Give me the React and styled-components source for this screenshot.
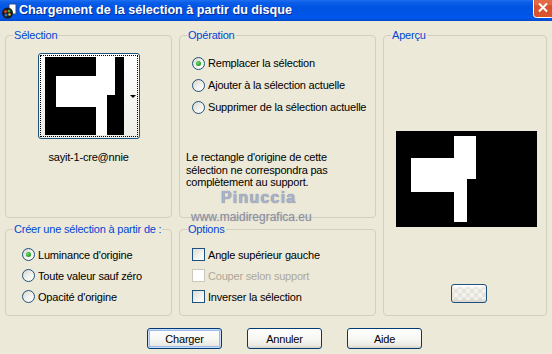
import React from "react";
import styled, { createGlobalStyle } from "styled-components";

const Global = createGlobalStyle`
  html, body { margin: 0; padding: 0; background: #ECE9D8; overflow: hidden; }
  body { font-family: "Liberation Sans", Arial, sans-serif; font-size: 11px; color: #000; }
`;

const Window = styled.div`
  position: relative;
  width: 552px;
  height: 354px;
  overflow: hidden;
  background: #ece9d8;
  display: flex;
  flex-direction: column;
`;

const TitleBar = styled.div`
  height: 21px;
  flex: none;
  display: flex;
  align-items: flex-start;
  background: linear-gradient(180deg, #1f6ff0 0%, #0a5ee8 12%, #0054e3 35%, #0055e8 70%, #0058ee 85%, #0049c8 100%);
  overflow: hidden;
`;

const TitleIcon = styled.div`
  flex: none;
  margin: 3px 0 0 1px;
  display: flex;
`;

const TitleText = styled.span`
  margin: 3px 0 0 2px;
  color: #fff;
  font-family: "Liberation Sans", Arial, sans-serif;
  font-weight: bold;
  font-size: 12.6px;
  line-height: 15px;
  text-shadow: 1px 1px 0 #0a2a8a;
  flex: 1;
`;

const CloseSlot = styled.div`
  flex: none;
  width: 19px;
  height: 18px;
  display: flex;
`;

const Content = styled.div`
  display: grid;
  grid-template-columns: 167px 197px 164px;
  grid-template-rows: 189px 93px;
  column-gap: 7px;
  row-gap: 5px;
  padding: 8px 0 0 5px;
`;

const Group = styled.fieldset`
  margin: 0;
  padding: 0;
  min-width: 0;
  border: 1px solid #d0d0bf;
  border-radius: 4px;
  display: flex;
  flex-direction: column;
  box-sizing: border-box;
  grid-column: ${(p) => p.$col};
  grid-row: ${(p) => p.$row};
`;

const Legend = styled.legend`
  color: #0046d5;
  padding: 0 1px;
  margin-left: 7px;
  font-size: 11px;
  line-height: 13px;
  letter-spacing: -0.2px;
`;

const Centered = styled.div`
  display: flex;
  flex-direction: column;
  align-items: center;
`;

const Thumb = styled.div`
  margin-top: 11px;
  width: 102px;
  height: 86px;
  box-sizing: border-box;
  border: 1px solid #1c5180;
  border-radius: 3px;
  padding: 1px;
  background: linear-gradient(180deg, #ffffff, #eeede6);
`;

const Focus = styled.div`
  height: 100%;
  box-sizing: border-box;
  border: 1px dotted #000;
  padding: 1px 0 0 4px;
  display: flex;
  align-items: flex-start;
`;

const Arrow = styled.div`
  width: 0;
  height: 0;
  margin: 38px 1px 0 auto;
  border-left: 3px solid transparent;
  border-right: 3px solid transparent;
  border-top: 3px solid #000;
`;

const Name = styled.div`
  margin-top: 12px;
  line-height: 13px;
  letter-spacing: -0.2px;
`;

const OptionList = styled.div`
  display: flex;
  flex-direction: column;
  padding: ${(p) => p.$pad};
`;

const Row = styled.label`
  display: flex;
  align-items: center;
  gap: 3px;
  height: ${(p) => p.$h}px;
  letter-spacing: -0.2px;
  color: ${(p) => (p.$disabled ? "#aca899" : "#000")};
`;

const Radio = styled.span`
  position: relative;
  width: 13px;
  height: 13px;
  box-sizing: border-box;
  border: 1px solid #1c5180;
  border-radius: 50%;
  background: linear-gradient(135deg, #d6d5cc 0%, #f3f2ed 55%, #ffffff 100%);
  flex: none;
  &::after {
    content: "";
    display: ${(p) => (p.$checked ? "block" : "none")};
    position: absolute;
    left: 3px;
    top: 3px;
    width: 5px;
    height: 5px;
    border-radius: 50%;
    background: radial-gradient(circle at 40% 40%, #7ee07e 0%, #2cab2c 50%, #1a8a1a 100%);
  }
`;

const Check = styled.span`
  width: 13px;
  height: 13px;
  box-sizing: border-box;
  flex: none;
  border: 1px solid ${(p) => (p.$disabled ? "#cac8bb" : "#1c5180")};
  background: ${(p) =>
    p.$disabled ? "#ffffff" : "linear-gradient(135deg, #dcdcd7 0%, #f4f4f0 60%, #ffffff 100%)"};
`;

const Note = styled.p`
  margin: 33px 0 0 6px;
  line-height: 12.5px;
  letter-spacing: -0.2px;
`;

const Preview = styled.div`
  margin: 89px 0 0 12px;
  width: 141px;
  height: 96px;
  background: #000;
  display: flex;
`;

const SmallBtn = styled.div`
  margin: 57px 0 0 67px;
  width: 36px;
  height: 19px;
  box-sizing: border-box;
  border: 1px solid #1c5180;
  border-radius: 3px;
  background:
    repeating-conic-gradient(#f4f3ee 0 25%, #e4e3dc 0 50%) 10px 4px / 8px 8px;
  box-shadow: inset 0 -2px 2px rgba(200, 196, 180, 0.5), inset 0 2px 2px #fff;
`;

const Footer = styled.div`
  display: flex;
  gap: 25px;
  padding-left: 147px;
  margin-top: 12px;
`;

const Button = styled.button`
  width: 75px;
  height: 21px;
  box-sizing: border-box;
  border: 1px solid #003c74;
  border-radius: 3px;
  font-family: "Liberation Sans", Arial, sans-serif;
  font-size: 11px;
  letter-spacing: -0.2px;
  color: #000;
  padding: 0;
  background: linear-gradient(180deg, #ffffff 0%, #f6f6f2 55%, #ebeae3 85%, #d8d3c8 100%);
  box-shadow: ${(p) =>
    p.$default ? "inset 0 0 0 1px #c6dcfa, inset 0 0 0 2px #9dbbeb" : "none"};
`;

const Watermark = styled.div`
  position: absolute;
  left: ${(p) => p.$x}px;
  top: ${(p) => p.$y}px;
  font-family: "Liberation Sans", Arial, sans-serif;
  font-size: ${(p) => p.$size}px;
  font-weight: ${(p) => (p.$bold ? "bold" : "normal")};
  letter-spacing: ${(p) => p.$ls}px;
  line-height: 18px;
  color: ${(p) => p.$color};
  text-shadow: 0 0 1px ${(p) => p.$shadow};
  pointer-events: none;
`;

function AppIcon() {
  return (
    <svg width="16" height="16" viewBox="0 0 16 16">
      <rect x="8" y="1" width="7" height="10" fill="#fff" stroke="#2a4d8f" strokeWidth="1" />
      <circle cx="6.5" cy="10" r="5.5" fill="#1a1a1a" />
      <circle cx="4.5" cy="8.5" r="1.6" fill="#d23a2a" />
      <circle cx="8" cy="8" r="1.5" fill="#3aa53a" />
      <circle cx="5" cy="12" r="1.5" fill="#2f6fd8" />
      <circle cx="8.5" cy="11.5" r="1.3" fill="#e0c020" />
    </svg>
  );
}

function CloseIcon() {
  return (
    <svg width="19" height="18" viewBox="0 0 19 18">
      <rect x="0.5" y="-3" width="21" height="20.5" rx="3" fill="#d9532f" stroke="#ffffff" />
      <rect x="1.5" y="-2" width="19" height="7" fill="#ea7a55" opacity="0.6" />
      <path d="M6 3.5 L14 11.5 M14 3.5 L6 11.5" stroke="#ffffff" strokeWidth="2" />
    </svg>
  );
}

function ThumbImage() {
  return (
    <svg width="79" height="78" viewBox="0 0 79 78">
      <rect width="79" height="78" fill="#000" />
      <path d="M51 0 H70 V38 H62 V78 H51 V50 H11 V19 H51 Z" fill="#fff" />
    </svg>
  );
}

function PreviewImage() {
  return (
    <svg width="141" height="96" viewBox="0 0 141 96">
      <rect width="141" height="96" fill="#000" />
      <path d="M58 5 H80 V48 H71 V91 H58 V61 H15 V27 H58 Z" fill="#fff" />
    </svg>
  );
}

export default function App() {
  return (
    <Window>
      <Global />
      <TitleBar>
        <TitleIcon>
          <AppIcon />
        </TitleIcon>
        <TitleText>Chargement de la sélection à partir du disque</TitleText>
        <CloseSlot>
          <CloseIcon />
        </CloseSlot>
      </TitleBar>

      <Content>
        <Group $col="1" $row="1">
          <Legend>Sélection</Legend>
          <Centered>
            <Thumb>
              <Focus>
                <ThumbImage />
                <Arrow />
              </Focus>
            </Thumb>
            <Name>sayit-1-cre@nnie</Name>
          </Centered>
        </Group>

        <Group $col="2" $row="1">
          <Legend>Opération</Legend>
          <OptionList $pad="10px 0 0 12px">
            <Row $h={22}>
              <Radio $checked />
              Remplacer la sélection
            </Row>
            <Row $h={22}>
              <Radio />
              Ajouter à la sélection actuelle
            </Row>
            <Row $h={22}>
              <Radio />
              Supprimer de la sélection actuelle
            </Row>
          </OptionList>
          <Note>
            Le rectangle d'origine de cette
            <br />
            sélection ne correspondra pas
            <br />
            complètement au support.
          </Note>
        </Group>

        <Group $col="3" $row="1 / span 2">
          <Legend>Aperçu</Legend>
          <Preview>
            <PreviewImage />
          </Preview>
          <SmallBtn />
        </Group>

        <Group $col="1" $row="2">
          <Legend>Créer une sélection à partir de :</Legend>
          <OptionList $pad="8px 0 0 16px">
            <Row $h={21}>
              <Radio $checked />
              Luminance d'origine
            </Row>
            <Row $h={21}>
              <Radio />
              Toute valeur sauf zéro
            </Row>
            <Row $h={21}>
              <Radio />
              Opacité d'origine
            </Row>
          </OptionList>
        </Group>

        <Group $col="2" $row="2">
          <Legend>Options</Legend>
          <OptionList $pad="8px 0 0 12px">
            <Row $h={21}>
              <Check />
              Angle supérieur gauche
            </Row>
            <Row $h={21} $disabled>
              <Check $disabled />
              Couper selon support
            </Row>
            <Row $h={21}>
              <Check />
              Inverser la sélection
            </Row>
          </OptionList>
        </Group>
      </Content>

      <Footer>
        <Button $default>Charger</Button>
        <Button>Annuler</Button>
        <Button>Aide</Button>
      </Footer>

      <Watermark $x={221} $y={189} $size={16} $bold $ls={1.2} $color="#aab2ca" $shadow="#5d6680">
        Pinuccia
      </Watermark>
      <Watermark $x={191} $y={208} $size={12} $ls={0} $color="#8e909e" $shadow="#b8bac4">
        www.maidiregrafica.eu
      </Watermark>
    </Window>
  );
}
